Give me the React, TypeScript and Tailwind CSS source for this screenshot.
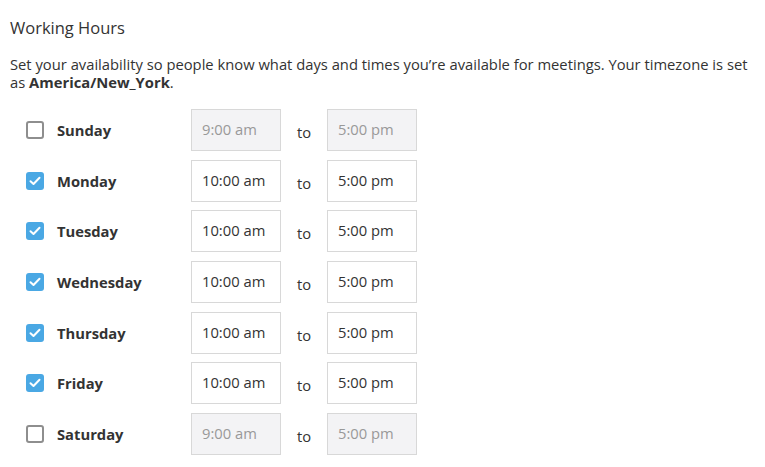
import React from "react";

type Day = { name: string; on: boolean; from: string; to: string };

const days: Day[] = [
	{ name: "Sunday", on: false, from: "9:00 am", to: "5:00 pm" },
	{ name: "Monday", on: true, from: "10:00 am", to: "5:00 pm" },
	{ name: "Tuesday", on: true, from: "10:00 am", to: "5:00 pm" },
	{ name: "Wednesday", on: true, from: "10:00 am", to: "5:00 pm" },
	{ name: "Thursday", on: true, from: "10:00 am", to: "5:00 pm" },
	{ name: "Friday", on: true, from: "10:00 am", to: "5:00 pm" },
	{ name: "Saturday", on: false, from: "9:00 am", to: "5:00 pm" },
];

const Box = ({ on }: { on: boolean }) =>
	on ? (
		<span className="w-[18px] h-[18px] rounded-[3px] bg-[#4aa8e4] flex items-center justify-center">
			<svg width="12" height="10" viewBox="0 0 12 10" fill="none">
				<path d="M1.5 5.2 4.5 8 10.5 1.8" stroke="white" strokeWidth="2" strokeLinecap="round" strokeLinejoin="round" />
			</svg>
		</span>
	) : (
		<span className="w-[18px] h-[18px] rounded-[3px] border-2 border-[#8e8e8e] bg-white" />
	);

const TimeBox = ({ value, on }: { value: string; on: boolean }) => (
	<div
		className={`w-[90px] h-[42px] border border-[#d8d8d8] pl-[10px] pt-[10px] text-[14.75px] leading-[18px] ${
			on ? "bg-white text-[#333]" : "bg-[#f3f3f5] text-[#999]"
		}`}
	>
		{value}
	</div>
);

const App = () => (
	<div className="w-[765px] h-[467px] bg-white px-[10px] pt-[17px] text-[#333] font-['Open_Sans',sans-serif]">
		<h2 className="text-[16.5px] leading-[22px]">Working Hours</h2>
		<p className="mt-[16px] text-[14.75px] leading-[18px]">
			Set your availability so people know what days and times you’re available for meetings. Your timezone is set
			as <b>America/New_York</b>.
		</p>
		<div className="mt-[18px] flex flex-col">
			{days.map((d) => (
				<div key={d.name} className="h-[50.67px] flex items-start">
					<div className="w-[181px] h-[42px] flex items-center pl-[16px]">
						<Box on={d.on} />
						<span className="ml-[13px] font-bold text-[14.75px]">{d.name}</span>
					</div>
					<TimeBox value={d.from} on={d.on} />
					<span className="w-[46px] pl-[16px] pt-[14px] text-[14.75px] leading-[18px]">to</span>
					<TimeBox value={d.to} on={d.on} />
				</div>
			))}
		</div>
	</div>
);

export default App;
